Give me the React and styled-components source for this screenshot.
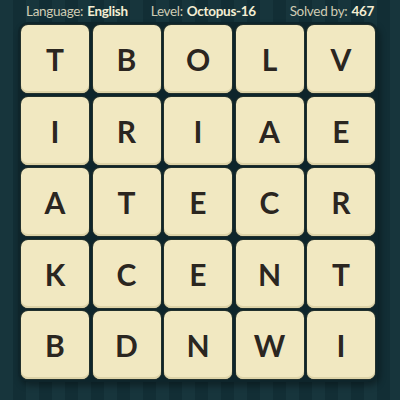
import React from "react";
import styled, { createGlobalStyle } from "styled-components";

const Global = createGlobalStyle`
  html, body {
    margin: 0;
    padding: 0;
  }
  body {
    width: 400px;
    height: 400px;
    overflow: hidden;
    background: repeating-linear-gradient(
      90deg,
      #17353c 0px,
      #17353c 13px,
      #122e35 13px,
      #122e35 26px
    );
    font-family: Lato, "Noto Sans", sans-serif;
  }
`;

const Page = styled.div`
  width: 400px;
  height: 400px;
  display: flex;
  flex-direction: column;
`;

const Header = styled.div`
  height: 22px;
  display: flex;
  align-items: center;
  padding: 0 26px 0 26px;
  font-size: 13.5px;
  letter-spacing: -0.3px;
  color: #cfccb4;
`;

const Stat = styled.span`
  white-space: nowrap;
  margin-left: ${(p) => p.$offset || "0"};
`;

const Value = styled.b`
  color: #f4eed3;
  font-weight: 700;
  margin-left: 4px;
`;

const Board = styled.div`
  margin-left: 18px;
  width: 354px;
  padding: 3px;
  border-radius: 10px;
  background: #0e252b;
  box-shadow: 2px 4px 6px rgba(0, 0, 0, 0.35);
  display: grid;
  grid-template-columns: repeat(5, 68px);
  grid-auto-rows: 68px;
  gap: 3.5px;
`;

const Tile = styled.div`
  box-sizing: border-box;
  border-radius: 7px;
  background: #f1e8c1;
  box-shadow: inset 0 -2px 0 #ddd3a8, 0 0 0 1px #22302c;
  display: flex;
  align-items: center;
  justify-content: center;
  font-size: 30px;
  font-weight: 700;
  color: #2b2620;
  text-shadow: 0 0 1px rgba(255, 250, 225, 0.8);
`;

const letters = "TBOLVIRIAEATECRKCENTBDNWI".split("");

export default function App() {
  return (
    <Page>
      <Global />
      <Header>
        <Stat>
          Language:<Value>English</Value>
        </Stat>
        <Stat $offset="23px">
          Level:<Value>Octopus-16</Value>
        </Stat>
        <Stat $offset="auto">
          Solved by:<Value>467</Value>
        </Stat>
      </Header>
      <Board>
        {letters.map((l, i) => (
          <Tile key={i}>{l}</Tile>
        ))}
      </Board>
    </Page>
  );
}
